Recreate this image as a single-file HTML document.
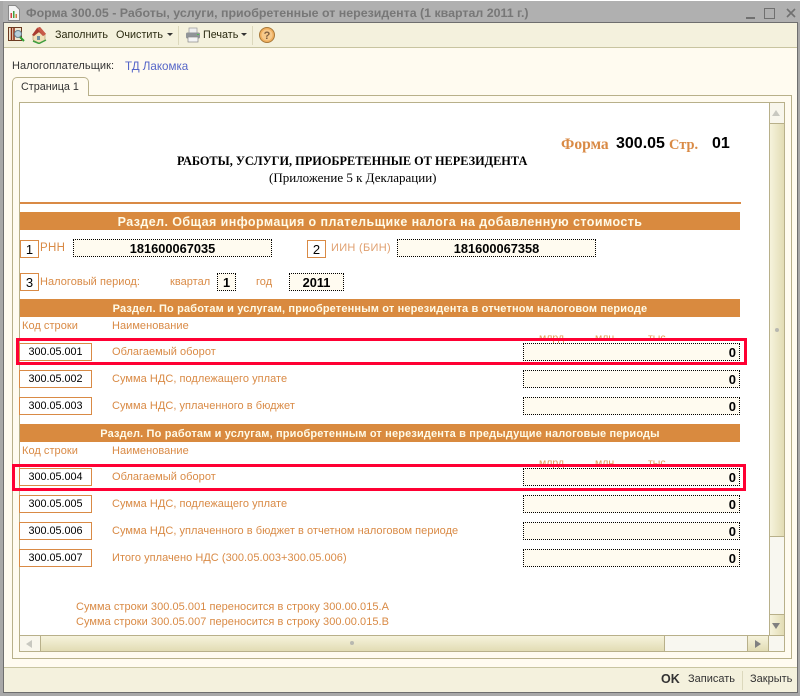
<!DOCTYPE html>
<html><head><meta charset="utf-8"><style>
html,body{margin:0;padding:0;background:#fff}
#w{position:relative;width:804px;height:696px;overflow:hidden;background:#fff;font-family:"Liberation Sans",sans-serif;font-size:11px}
#w div{position:absolute;box-sizing:border-box;white-space:nowrap}
.o{color:#d98a45;font-size:11px;line-height:20px;letter-spacing:.04px}
.code{left:19px;width:73px;height:18px;border:1px solid #d98a45;background:#fff;color:#000;font-size:10.8px;line-height:16px;text-align:center}
.val{left:523px;width:217px;height:18px;border:1px dotted #000;background:#fffbf0;color:#000;font-weight:bold;font-size:13px;line-height:17px;text-align:right;padding-right:3px}
.dot{border:1px dotted #000;background:#fffbf0;color:#000;font-weight:bold;font-size:12.8px;line-height:17px;text-align:center}
.num{width:19px;height:18px;border:1px solid #d98a45;background:#fff;color:#000;font-size:13px;line-height:17px;text-align:center}
.bar{left:20px;width:720px;height:18px;background:#d98a3f;color:#fffbe8;font-weight:bold;line-height:20px;text-align:center}
.red{border:3px solid #ff0033}
.small{color:#e09a55;font-size:10.5px;line-height:12px}
.t{color:#2a2a10;line-height:15px;font-size:10.8px}
</style></head><body><div id="w">
<div style="left:0;top:1px;width:800px;height:695px;background:#a8a8a8"></div>
<div style="left:3px;top:1px;width:797px;height:22px;background:#b0b0b0"></div>
<div style="left:3px;top:22px;width:795px;height:671px;background:#fffbf0;border:1px solid #6e6e6e"></div>
<svg style="position:absolute;left:8px;top:5px" width="12" height="16" viewBox="0 0 12 16"><path d="M.5.5h7l4 4v11H.5z" fill="#f4f4f4" stroke="#8a8a8a"/><path d="M2.500 13V8H4v5z" fill="#d04040"/><path d="M5 13V6h1.500v7z" fill="#40a040"/><path d="M7.500 13V9H9v4z" fill="#d08040"/></svg>
<div style="left:26px;top:4px;font-weight:bold;color:#777;line-height:18px;font-size:12.4px">Форма 300.05 - Работы, услуги, приобретенные от нерезидента (1 квартал 2011 г.)</div>
<div style="left:746px;top:17px;width:9px;height:2px;background:#707070"></div>
<div style="left:764px;top:8px;width:11px;height:11px;border:1px solid #707070"></div>
<svg style="position:absolute;left:786px;top:8px" width="10" height="10" viewBox="0 0 10 10"><path d="M1 1l8 8M9 1l-8 8" stroke="#707070" stroke-width="1.600"/></svg>
<div style="left:4px;top:23px;width:793px;height:25px;background:#f4f1dd;border-bottom:1px solid #c8c4a0"></div>
<svg style="position:absolute;left:8px;top:26px" width="17" height="18" viewBox="0 0 17 18"><rect x=".5" y="1.500" width="13" height="13" fill="#efe6d0" stroke="#6b3a20"/><path d="M3.500 2v12M6 2v12" stroke="#8a2a10" stroke-width="1.500"/><circle cx="10" cy="8" r="3.500" fill="#b8d0dc" stroke="#6a8090"/><path d="M12 11l4 4" stroke="#30a030" stroke-width="2"/></svg>
<svg style="position:absolute;left:30px;top:26px" width="18" height="18" viewBox="0 0 18 18"><path d="M3 9l6-3 6 3v5l-6 3-6-3z" fill="#efe2b8" stroke="#a08050" stroke-width=".5"/><path d="M2 9l5-7 3-1 6 7-3 2-4-4-5 4z" fill="#a83c30"/><path d="M7 2l3-1 6 7-3 2z" fill="#c85a48"/><path d="M3 15l6 2.500 7-3.500" stroke="#40a040" stroke-width="1.500" fill="none"/><rect x="7" y="10" width="3" height="4" fill="#7090a0"/></svg>
<div class="t" style="left:55px;top:28px">Заполнить</div>
<div class="t" style="left:116px;top:28px">Очистить</div>
<svg style="position:absolute;left:167px;top:33px" width="7" height="4"><path d="M0 0h6L3 3z" fill="#333"/></svg>
<div style="left:178px;top:26px;width:1px;height:19px;background:#dcd8bc"></div>
<svg style="position:absolute;left:185px;top:27px" width="16" height="16" viewBox="0 0 16 16"><rect x="4" y="1" width="8" height="5" fill="#eee" stroke="#999" stroke-width=".7"/><rect x="1" y="5.500" width="14" height="6" rx="1.500" fill="#909498"/><rect x="3" y="10" width="10" height="5" fill="#f4f4f4" stroke="#888" stroke-width=".7"/><rect x="12" y="7" width="2" height="1" fill="#50c050"/></svg>
<div class="t" style="left:203px;top:28px">Печать</div>
<svg style="position:absolute;left:241px;top:33px" width="7" height="4"><path d="M0 0h6L3 3z" fill="#333"/></svg>
<div style="left:252px;top:26px;width:1px;height:19px;background:#dcd8bc"></div>
<svg style="position:absolute;left:259px;top:27px" width="16" height="16" viewBox="0 0 16 16"><circle cx="8" cy="8" r="7.500" fill="#f0b060" stroke="#a87838"/><circle cx="8" cy="8" r="5.500" fill="#f6c98a"/><text x="8" y="12" text-anchor="middle" font-family="Liberation Sans" font-size="11" font-weight="bold" fill="#806040">?</text></svg>
<div style="left:12px;top:59px;color:#333;line-height:15px;font-size:11px;letter-spacing:.08px">Налогоплательщик:</div>
<div style="left:125px;top:59px;color:#5565c8;line-height:15px;font-size:11.6px">ТД Лакомка</div>
<div style="left:12px;top:95px;width:780px;height:564px;border:1px solid #b8b08a"></div>
<div style="left:12px;top:77px;width:77px;height:19px;background:#fffbf0;border:1px solid #b8b08a;border-bottom:0;border-radius:5px 5px 0 0;color:#333;line-height:19px;padding-left:8px;font-size:10.8px">Страница 1</div>
<div style="left:19px;top:102px;width:766px;height:550px;background:#fff;border:1px solid #b8b08a"></div>
<div style="left:769px;top:103px;width:15px;height:21px;background:#f8f6ec;border-left:1px solid #b8b08a;border-bottom:1px solid #b8b08a"></div>
<svg style="position:absolute;left:772px;top:110px" width="9" height="7"><path d="M0 6h8L4 0z" fill="#c8c8c0"/></svg>
<div style="left:769px;top:124px;width:15px;height:413px;background:linear-gradient(90deg,#f6f3dc,#e2dcb4);border-left:1px solid #b8b08a;border-bottom:1px solid #b8b08a"></div>
<div style="left:775px;top:328px;width:4px;height:4px;background:#b8b8b0;border-radius:2px"></div>
<div style="left:769px;top:537px;width:15px;height:78px;background:#f8f7f0;border-left:1px solid #b8b08a"></div>
<div style="left:769px;top:614px;width:15px;height:22px;background:linear-gradient(90deg,#f6f3dc,#e2dcb4);border-left:1px solid #b8b08a;border-top:1px solid #b8b08a"></div>
<svg style="position:absolute;left:772px;top:623px" width="9" height="7"><path d="M0 0h8L4 6z" fill="#808080"/></svg>
<div style="left:20px;top:635px;width:764px;height:16px;background:#f8f7f0;border-top:1px solid #b8b08a"></div>
<div style="left:20px;top:636px;width:21px;height:15px;background:#f8f6ec;border-right:1px solid #b8b08a"></div>
<svg style="position:absolute;left:26px;top:640px" width="7" height="9"><path d="M6 0v8L0 4z" fill="#c8c8c0"/></svg>
<div style="left:41px;top:636px;width:624px;height:15px;background:linear-gradient(180deg,#f6f3dc,#e2dcb4);border-right:1px solid #b8b08a"></div>
<div style="left:350px;top:641px;width:4px;height:4px;background:#b8b8b0;border-radius:2px"></div>
<div style="left:747px;top:636px;width:22px;height:15px;background:linear-gradient(180deg,#f6f3dc,#e2dcb4);border-left:1px solid #b8b08a;border-right:1px solid #b8b08a"></div>
<svg style="position:absolute;left:755px;top:640px" width="7" height="9"><path d="M0 0v8l6-4z" fill="#808080"/></svg>
<div style="left:769px;top:636px;width:15px;height:15px;background:#f8f7f0"></div>
<div style="left:4px;top:667px;width:793px;height:25px;background:#f4f1dd;border-top:1px solid #c8c4a0"></div>
<div style="left:661px;top:672px;font-weight:bold;font-size:12.5px;color:#333;line-height:15px">OK</div>
<div style="left:688px;top:672px;color:#333;line-height:15px;font-size:11px">Записать</div>
<div style="left:742px;top:671px;width:1px;height:19px;background:#dcd8bc"></div>
<div style="left:750px;top:672px;color:#333;line-height:15px;font-size:11px">Закрыть</div>
<div style="left:561px;top:136px;font-family:'Liberation Serif',serif;font-weight:bold;font-size:15.5px;color:#d98a45;line-height:18px">Форма</div>
<div style="left:616px;top:135px;font-weight:bold;font-size:16px;color:#000;line-height:18px">300.05</div>
<div style="left:669px;top:136px;font-family:'Liberation Serif',serif;font-weight:bold;font-size:14.4px;color:#d98a45;line-height:18px">Стр.</div>
<div style="left:712px;top:135px;font-weight:bold;font-size:16px;color:#000;line-height:18px">01</div>
<div style="left:177px;top:154px;font-family:'Liberation Serif',serif;font-weight:bold;font-size:12.3px;color:#000;line-height:14px">РАБОТЫ, УСЛУГИ, ПРИОБРЕТЕННЫЕ ОТ НЕРЕЗИДЕНТА</div>
<div style="left:269px;top:171px;font-family:'Liberation Serif',serif;font-size:13px;color:#000;line-height:14px">(Приложение 5 к Декларации)</div>
<div style="left:20px;top:202px;width:721px;height:2px;background:#d98a45"></div>
<div class="bar" style="top:212px;font-size:12.5px;letter-spacing:.42px">Раздел. Общая информация о плательщике налога на добавленную стоимость</div>
<div class="num" style="left:20px;top:240px">1</div>
<div class="o" style="left:40px;top:239px;font-size:11.5px;letter-spacing:.3px;line-height:18px">РНН</div>
<div class="dot" style="left:73px;top:239px;width:199px;height:18px">181600067035</div>
<div class="num" style="left:307px;top:240px">2</div>
<div class="o" style="left:331px;top:239px;letter-spacing:.3px;color:#e0a070;line-height:18px">ИИН (БИН)</div>
<div class="dot" style="left:397px;top:239px;width:199px;height:18px">181600067358</div>
<div class="num" style="left:20px;top:273px">3</div>
<div class="o" style="left:40px;top:272px">Налоговый период:</div>
<div class="o" style="left:170px;top:272px">квартал</div>
<div class="dot" style="left:217px;top:273px;width:19px;height:18px">1</div>
<div class="o" style="left:256px;top:272px">год</div>
<div class="dot" style="left:289px;top:273px;width:55px;height:18px">2011</div>
<div class="bar" style="top:299px;font-size:11px;letter-spacing:.15px">Раздел. По работам и услугам, приобретенным от нерезидента в отчетном налоговом периоде</div>
<div class="o" style="left:22px;top:316px">Код строки</div>
<div class="o" style="left:112px;top:316px">Наименование</div>
<div class="small" style="left:539px;top:332px">млрд</div>
<div class="small" style="left:595px;top:332px">млн</div>
<div class="small" style="left:648px;top:332px">тыс</div>
<div class="code" style="top:343px">300.05.001</div>
<div class="o" style="left:112px;top:342px">Облагаемый оборот</div>
<div class="val" style="top:343px">0</div>
<div class="code" style="top:370px">300.05.002</div>
<div class="o" style="left:112px;top:369px">Сумма НДС, подлежащего уплате</div>
<div class="val" style="top:370px">0</div>
<div class="code" style="top:397px">300.05.003</div>
<div class="o" style="left:112px;top:396px">Сумма НДС, уплаченного в бюджет</div>
<div class="val" style="top:397px">0</div>
<div class="red" style="left:16px;top:338px;width:731px;height:27px"></div>
<div class="bar" style="top:424px;font-size:11px;letter-spacing:.15px">Раздел. По работам и услугам, приобретенным от нерезидента в предыдущие налоговые периоды</div>
<div class="o" style="left:22px;top:441px">Код строки</div>
<div class="o" style="left:112px;top:441px">Наименование</div>
<div class="small" style="left:539px;top:457px">млрд</div>
<div class="small" style="left:595px;top:457px">млн</div>
<div class="small" style="left:648px;top:457px">тыс</div>
<div class="code" style="top:468px">300.05.004</div>
<div class="o" style="left:112px;top:467px">Облагаемый оборот</div>
<div class="val" style="top:468px">0</div>
<div class="code" style="top:495px">300.05.005</div>
<div class="o" style="left:112px;top:494px">Сумма НДС, подлежащего уплате</div>
<div class="val" style="top:495px">0</div>
<div class="code" style="top:522px">300.05.006</div>
<div class="o" style="left:112px;top:521px">Сумма НДС, уплаченного в бюджет в отчетном налоговом периоде</div>
<div class="val" style="top:522px">0</div>
<div class="code" style="top:549px">300.05.007</div>
<div class="o" style="left:112px;top:548px">Итого уплачено НДС (300.05.003+300.05.006)</div>
<div class="val" style="top:549px">0</div>
<div class="red" style="left:12px;top:464px;width:734px;height:27px"></div>
<div class="o" style="left:76px;top:597px">Сумма строки 300.05.001 переносится в строку 300.00.015.А</div>
<div class="o" style="left:76px;top:612px">Сумма строки 300.05.007 переносится в строку 300.00.015.В</div>
</div></body></html>
